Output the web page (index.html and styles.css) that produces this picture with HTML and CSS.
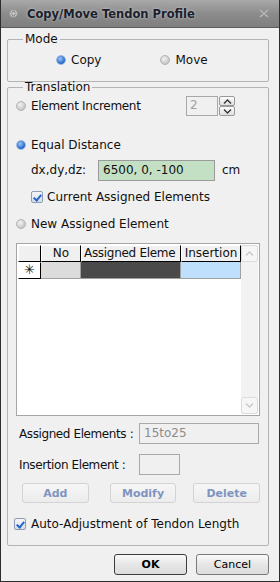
FILE: index.html
```html
<!DOCTYPE html>
<html lang="en">
<head>
    <meta charset="UTF-8">
    <meta name="viewport" content="width=device-width, initial-scale=1.0">
    <title>Copy/Move Tendon Profile</title>
    <link rel="stylesheet" href="styles.css">
</head>
<body>
    <div class="window">
        <div class="titlebar">
            <svg class="app-icon" width="9" height="9" viewBox="0 0 9 9">
                <circle cx="4.5" cy="4.5" r="4" fill="#c8c8c8" stroke="#8a8a8a" stroke-width="0.8"/>
                <path d="M2.5 3.8 L4.5 2 L6.5 3.8 M2.5 5.2 L4.5 7 L6.5 5.2" fill="none" stroke="#5a5a5a" stroke-width="0.9"/>
            </svg>
            <span class="title">Copy/Move Tendon Profile</span>
            <svg class="close" width="10" height="9" viewBox="0 0 10 9">
                <path d="M1 1 L9 8 M9 1 L1 8" stroke="#b8b8b8" stroke-width="1.4"/>
            </svg>
        </div>

        <div class="content">
            <fieldset class="group mode">
                <legend>Mode</legend>
                <div class="mode-row">
                    <label class="opt copy"><span class="radio on"></span>Copy</label>
                    <label class="opt move"><span class="radio"></span>Move</label>
                </div>
            </fieldset>

            <fieldset class="group translation">
                <legend>Translation</legend>

                <div class="row r-incr">
                    <label class="opt"><span class="radio"></span>Element Increment</label>
                    <div class="spin">
                        <div class="spin-box">2</div>
                        <div class="spin-btns">
                            <span class="spin-btn">
                                <svg width="9" height="5" viewBox="0 0 9 5"><path d="M1 4.5 L4.5 1 L8 4.5" fill="none" stroke="#333" stroke-width="1.3"/></svg>
                            </span>
                            <span class="spin-btn">
                                <svg width="9" height="5" viewBox="0 0 9 5"><path d="M1 0.5 L4.5 4 L8 0.5" fill="none" stroke="#333" stroke-width="1.3"/></svg>
                            </span>
                        </div>
                    </div>
                </div>

                <div class="row r-equal">
                    <label class="opt"><span class="radio on"></span>Equal Distance</label>
                </div>

                <div class="row r-dx">
                    <span class="dx-label">dx,dy,dz:</span>
                    <div class="field green">6500, 0, -100</div>
                    <span class="unit">cm</span>
                </div>

                <div class="row r-current">
                    <label class="opt"><span class="check on"></span>Current Assigned Elements</label>
                </div>

                <div class="row r-new">
                    <label class="opt"><span class="radio"></span>New Assigned Element</label>
                </div>

                <div class="grid">
                    <div class="grid-body">
                        <div class="grid-row head">
                            <span class="cell c-corner"></span>
                            <span class="cell c-no">No</span>
                            <span class="cell c-assigned">Assigned Eleme</span>
                            <span class="cell c-insert">Insertion</span>
                        </div>
                        <div class="grid-row new">
                            <span class="cell c-corner">&#x2733;</span>
                            <span class="cell c-no"></span>
                            <span class="cell c-assigned"></span>
                            <span class="cell c-insert"></span>
                        </div>
                    </div>
                    <div class="scrollbar">
                        <span class="sb-btn">
                            <svg width="9" height="5" viewBox="0 0 9 5"><path d="M1 4.5 L4.5 1 L8 4.5" fill="none" stroke="#c8c8c8" stroke-width="1.3"/></svg>
                        </span>
                        <span class="sb-track"></span>
                        <span class="sb-btn">
                            <svg width="9" height="5" viewBox="0 0 9 5"><path d="M1 0.5 L4.5 4 L8 0.5" fill="none" stroke="#c8c8c8" stroke-width="1.3"/></svg>
                        </span>
                    </div>
                </div>

                <div class="row r-assigned">
                    <span class="field-label">Assigned Elements :</span>
                    <div class="field disabled wide">15to25</div>
                </div>

                <div class="row r-insertion">
                    <span class="field-label">Insertion Element :</span>
                    <div class="field disabled short"></div>
                </div>

                <div class="row r-buttons">
                    <button class="btn dim add">Add</button>
                    <button class="btn dim modify">Modify</button>
                    <button class="btn dim delete">Delete</button>
                </div>

                <div class="row r-auto">
                    <label class="opt"><span class="check on"></span>Auto-Adjustment of Tendon Length</label>
                </div>
            </fieldset>

            <div class="footer">
                <button class="btn ok">OK</button>
                <button class="btn cancel">Cancel</button>
            </div>
        </div>
    </div>
</body>
</html>
```

FILE: styles.css
```css
* { box-sizing: border-box; }
body { margin: 0; font-family: "DejaVu Sans", sans-serif; font-size: 11px; color: #111; }
.window { width: 280px; height: 582px; background: #f0f0f0; border: 1px solid #2e2e2e; border-top: 0; display: flex; flex-direction: column; }

/* title bar */
.titlebar { height: 28px; flex: none; display: flex; align-items: center; padding: 0 10px 0 8px; background: linear-gradient(#a9a9a9, #8c8c8c 50%, #7e7e7e); border-bottom: 1px solid #5e5e5e; }
.app-icon { flex: none; margin-right: 9px; }
.title { font-weight: bold; font-size: 11.5px; color: #1b1f2e; text-shadow: 0 0 3px rgba(255,255,255,0.55); flex: 1; }
.close { flex: none; }

.content { padding: 5px 10px 0 6px; flex: 1; }

/* group boxes */
.group { margin: 0; border: 1px solid #b4b4b4; border-radius: 2px; padding: 0 8px; min-width: 0; }
.group legend { padding: 0 2px; margin-left: 7px; line-height: 13px; font-size: 12px; color: #111; }
.mode { height: 49px; }
.mode-row { display: flex; height: 14px; margin-top: 7px; }
.opt { display: flex; align-items: center; height: 14px; font-size: 12px; white-space: nowrap; }
.mode .copy { margin-left: 40px; }
.mode .move { margin-left: 59px; }

.radio { width: 10px; height: 10px; border-radius: 50%; margin-right: 5px; flex: none; background: radial-gradient(circle at 40% 35%, #f2f2f2, #c4c4c4 75%); border: 1px solid #b4b4b4; }
.radio.on { background: radial-gradient(circle at 40% 35%, #9cc8f7, #2a6bcd 65%); border-color: #98b4dc; }

.check { width: 12px; height: 12px; margin-right: 4px; flex: none; border: 1px solid #8e9db5; border-radius: 2px; background: linear-gradient(#f4f6fa, #d7dde8); position: relative; }
.check.on::after { content: ""; position: absolute; left: 3px; top: 1px; width: 3px; height: 6px; border: solid #2566c9; border-width: 0 2px 2px 0; transform: rotate(40deg); }

.translation { margin-top: -1px; height: 465px; }
.row { display: flex; align-items: center; }
.r-incr { height: 20px; margin-top: 2px; justify-content: space-between; padding-right: 25px; }
.r-incr .opt { letter-spacing: -0.3px; }
.spin { display: flex; height: 20px; }
.spin-box { width: 32px; height: 20px; border: 1px solid #a8a8a8; background: #f0f0f0; color: #a0a0a0; font-size: 12px; padding: 1px 3px; }
.spin-btns { display: flex; flex-direction: column; margin-left: 1px; }
.spin-btn { width: 16px; height: 10px; border: 1px solid #9a9a9a; border-radius: 2px; background: linear-gradient(#fdfdfd, #dedede); display: flex; align-items: center; justify-content: center; }

.r-equal { height: 14px; margin-top: 22px; }
.r-dx { height: 20px; margin-top: 8px; padding-left: 15px; }
.dx-label { width: 67px; font-size: 12px; }
.field { height: 21px; border: 1px solid #a5a5a5; font-size: 12px; padding: 2px 4px; white-space: nowrap; }
.field.green { width: 117px; background: #c4e0c4; border-color: #9a9a9a; }
.unit { margin-left: 7px; font-size: 12px; }
.r-current { height: 14px; margin-top: 10px; padding-left: 15px; }
.r-new { height: 14px; margin-top: 13px; }

/* grid */
.grid { display: flex; height: 173px; margin-top: 12px; border: 1px solid #a6a6a6; background: #fff; padding: 1px; }
.grid-body { flex: 1; }
.grid-row { display: flex; height: 17px; }
.cell { flex: none; font-size: 12px; line-height: 15px; text-align: center; overflow: hidden; white-space: nowrap; }
.head .cell { background: #f0f0f0; border: 1px solid #000; border-color: #fff #000 #000 #fff; }
.head .c-assigned { text-align: left; padding-left: 2px; letter-spacing: -0.3px; }
.c-corner { width: 23px; }
.c-no { width: 40px; }
.c-assigned { width: 100px; }
.c-insert { width: 60px; }
.new .cell { border-right: 1px solid #a0a0a0; border-bottom: 1px solid #a0a0a0; }
.new .c-corner { background: #fff; border: 1px solid #000; border-color: #fff #000 #000 #fff; font-size: 13px; line-height: 14px; font-weight: bold; }
.new .c-no { background: #dcdcdc; }
.new .c-assigned { background: #4a4a4a; }
.new .c-insert { background: #bee0fd; }
.scrollbar { width: 18px; display: flex; flex-direction: column; }
.sb-btn { height: 17px; border: 1px solid #dcdcdc; border-radius: 2px; background: #f6f6f6; display: flex; align-items: center; justify-content: center; }
.sb-track { flex: 1; background: #f2f2f2; }

.r-assigned { height: 21px; margin-top: 7px; }
.r-insertion { height: 21px; margin-top: 10px; }
.field-label { width: 123px; padding-left: 3px; font-size: 12px; white-space: nowrap; letter-spacing: -0.4px; }
.field.disabled { background: #f0f0f0; color: #8c8c8c; border-color: #a9a9a9; }
.field.wide { width: 120px; }
.field.short { width: 41px; }

/* buttons */
.btn { font-family: "DejaVu Sans", sans-serif; font-size: 11px; height: 20px; border: 1px solid #7a7a7a; border-radius: 3px; background: linear-gradient(#fafafa, #e6e6e6 50%, #dcdcdc); padding: 0; cursor: pointer; }
.btn.dim { border-color: #d3d3d3; color: #7f95bf; font-weight: bold; background: linear-gradient(#f6f6f6, #ececec); width: 67px; }
.r-buttons { height: 20px; margin-top: 8px; }
.add { margin-left: 6px; }
.modify { margin-left: 21px; }
.delete { margin-left: 17px; }
.r-auto { height: 14px; margin-top: 14px; }
.r-auto .check { margin-left: -2px; margin-right: 5px; }

.footer { display: flex; justify-content: flex-end; margin-top: 8px; gap: 9px; }
.ok, .cancel { width: 73px; height: 21px; }
.ok { font-weight: bold; border-color: #3c3c3c; }
```
